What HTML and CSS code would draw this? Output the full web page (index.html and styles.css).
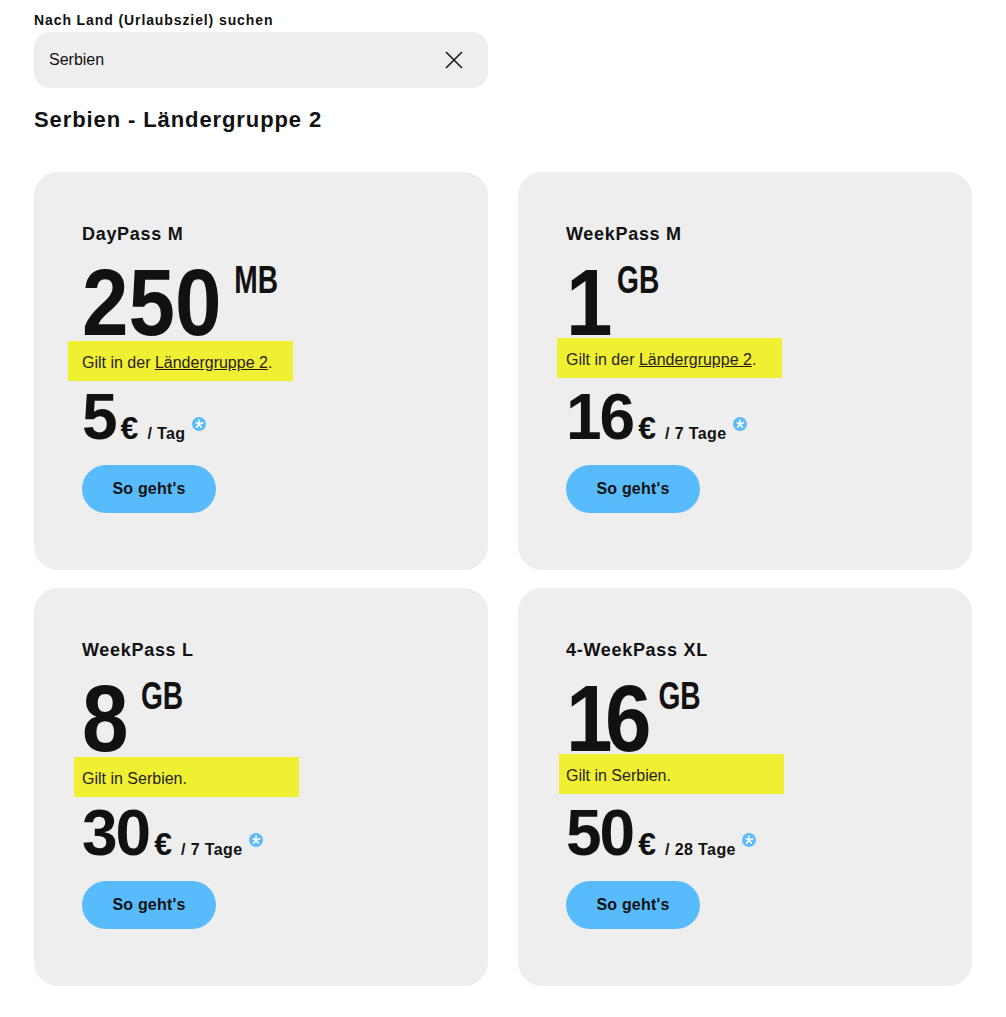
FILE: index.html
```html
<!DOCTYPE html>
<html lang="de">
<head>
<meta charset="utf-8">
<title>Serbien - Ländergruppe 2</title>
<link rel="stylesheet" href="styles.css">
</head>
<body>
<main class="page">
  <label class="search-label" for="country">Nach Land (Urlaubsziel) suchen</label>
  <div class="search-box">
    <span class="search-value" id="country">Serbien</span>
    <svg class="clear-icon" width="18" height="18" viewBox="0 0 18 18" aria-hidden="true">
      <path d="M1 1 L17 17 M17 1 L1 17" stroke="#1a1a1a" stroke-width="1.6" fill="none"/>
    </svg>
  </div>
  <h1 class="result-title">Serbien - Ländergruppe 2</h1>

  <div class="cards">
    <section class="card">
      <h2 class="card-title">DayPass M</h2>
      <div class="volume"><span class="volume-num">250</span><span class="volume-unit">MB</span></div>
      <p class="validity validity--a">Gilt in der <a href="#">Ländergruppe 2</a>.</p>
      <div class="price">
        <span class="price-num">5</span><span class="price-cur">€</span><span class="price-per">/ Tag</span>
        <span class="star"><svg width="14" height="14" viewBox="0 0 14 14"><path d="M7 3 V7 M7 7 L10.8 5.8 M7 7 L4.2 5.8 M7 7 L9.4 10.2 M7 7 L4.6 10.2" stroke="#fff" stroke-width="1.5" stroke-linecap="round" fill="none"/></svg></span>
      </div>
      <a class="btn" href="#">So geht's</a>
    </section>

    <section class="card">
      <h2 class="card-title">WeekPass M</h2>
      <div class="volume"><span class="volume-num"><span class="one">1</span></span><span class="volume-unit">GB</span></div>
      <p class="validity validity--b">Gilt in der <a href="#">Ländergruppe 2</a>.</p>
      <div class="price">
        <span class="price-num"><span class="one">1</span>6</span><span class="price-cur">€</span><span class="price-per">/ 7 Tage</span>
        <span class="star"><svg width="14" height="14" viewBox="0 0 14 14"><path d="M7 3 V7 M7 7 L10.8 5.8 M7 7 L4.2 5.8 M7 7 L9.4 10.2 M7 7 L4.6 10.2" stroke="#fff" stroke-width="1.5" stroke-linecap="round" fill="none"/></svg></span>
      </div>
      <a class="btn" href="#">So geht's</a>
    </section>

    <section class="card">
      <h2 class="card-title">WeekPass L</h2>
      <div class="volume"><span class="volume-num">8</span><span class="volume-unit">GB</span></div>
      <p class="validity validity--c">Gilt in Serbien.</p>
      <div class="price">
        <span class="price-num">30</span><span class="price-cur">€</span><span class="price-per">/ 7 Tage</span>
        <span class="star"><svg width="14" height="14" viewBox="0 0 14 14"><path d="M7 3 V7 M7 7 L10.8 5.8 M7 7 L4.2 5.8 M7 7 L9.4 10.2 M7 7 L4.6 10.2" stroke="#fff" stroke-width="1.5" stroke-linecap="round" fill="none"/></svg></span>
      </div>
      <a class="btn" href="#">So geht's</a>
    </section>

    <section class="card">
      <h2 class="card-title">4-WeekPass XL</h2>
      <div class="volume"><span class="volume-num"><span class="one">1</span>6</span><span class="volume-unit volume-unit--tight">GB</span></div>
      <p class="validity validity--d">Gilt in Serbien.</p>
      <div class="price">
        <span class="price-num">50</span><span class="price-cur">€</span><span class="price-per">/ 28 Tage</span>
        <span class="star"><svg width="14" height="14" viewBox="0 0 14 14"><path d="M7 3 V7 M7 7 L10.8 5.8 M7 7 L4.2 5.8 M7 7 L9.4 10.2 M7 7 L4.6 10.2" stroke="#fff" stroke-width="1.5" stroke-linecap="round" fill="none"/></svg></span>
      </div>
      <a class="btn" href="#">So geht's</a>
    </section>
  </div>
</main>
</body>
</html>
```

FILE: styles.css
```css
* { box-sizing: border-box; }

html, body {
  margin: 0;
  padding: 0;
  background: #ffffff;
  color: #111111;
  font-family: "Liberation Sans", Arial, sans-serif;
}

.page {
  padding: 10px 34px 30px;
  width: 1006px;
}

.search-label {
  display: block;
  font-size: 14px;
  line-height: 20px;
  font-weight: 700;
  letter-spacing: 0.9px;
  color: #111;
}

.search-box {
  margin-top: 2px;
  width: 454px;
  height: 56px;
  background: #eeeeee;
  border-radius: 16px;
  display: flex;
  align-items: center;
  justify-content: space-between;
  padding: 0 25px 0 15px;
}

.search-value {
  font-size: 16px;
  color: #111;
}

.clear-icon { display: block; }

.result-title {
  margin: 18px 0 38px;
  font-size: 22px;
  line-height: 28px;
  font-weight: 700;
  letter-spacing: 0.9px;
  color: #111;
}

.cards {
  display: grid;
  grid-template-columns: 454px 454px;
  column-gap: 30px;
  row-gap: 18px;
}

.card {
  background: #eeeeee;
  border-radius: 24px;
  height: 398px;
  padding: 50px 48px 0;
  display: flex;
  flex-direction: column;
  align-items: flex-start;
}

.card-title {
  margin: 0;
  font-size: 18px;
  line-height: 24px;
  font-weight: 700;
  letter-spacing: 0.7px;
  color: #111;
}

.volume {
  margin-top: 16px;
  display: flex;
  align-items: flex-start;
  height: 80px;
  transform: scaleX(0.88);
  transform-origin: left top;
}

.volume-num,
.volume-unit,
.price-num,
.price-cur {
  font-family: "Liberation Sans", Arial, sans-serif;
  font-weight: 700;
  color: #111;
}

.volume-num {
  font-size: 95px;
  line-height: 80px;
  letter-spacing: 0;
}

.volume-unit {
  margin-left: 14px;
  margin-top: -2px;
  font-size: 39px;
  line-height: 39px;
  transform: scaleX(0.82);
  transform-origin: left top;
}

.volume-unit--tight { margin-left: 8px; }

.volume-num .one { margin-right: -0.09em; }
.price-num .one { margin-right: 0; }

.validity {
  margin: -1px 0 0;
  width: 225px;
  height: 40px;
  background: #eff032;
  font-size: 16px;
  line-height: 32px;
  padding-top: 6px;
  color: #2a2222;
}

.validity a { color: #2a1a1a; text-decoration: underline; }

.validity--a { margin-left: -14px; padding-left: 14px; }
.validity--b { margin-left: -9px; padding-left: 9px; margin-top: -4px; margin-bottom: 3px; }
.validity--c { margin-left: -8px; padding-left: 8px; }
.validity--d { margin-left: -7px; padding-left: 7px; margin-top: -4px; margin-bottom: 3px; }

.price {
  margin-top: 8px;
  display: flex;
  align-items: baseline;
  height: 56px;
}

.price-num {
  font-size: 64px;
  line-height: 56px;
  letter-spacing: -2px;
}

.price-cur {
  margin-left: 5px;
  font-size: 32px;
}

.price-per {
  margin-left: 9px;
  font-size: 16px;
  font-weight: 700;
  letter-spacing: 0.4px;
  color: #111;
}

.star {
  margin-left: 6px;
  width: 14px;
  height: 14px;
  border-radius: 50%;
  background: #5cbcfa;
  align-self: flex-start;
  margin-top: 28px;
  display: flex;
}

.star svg { display: block; }

.btn {
  margin-top: 20px;
  width: 134px;
  height: 48px;
  border-radius: 24px;
  background: #58bcfc;
  color: #111;
  text-decoration: none;
  font-size: 16px;
  font-weight: 700;
  letter-spacing: 0.2px;
  display: flex;
  align-items: center;
  justify-content: center;
}
```
